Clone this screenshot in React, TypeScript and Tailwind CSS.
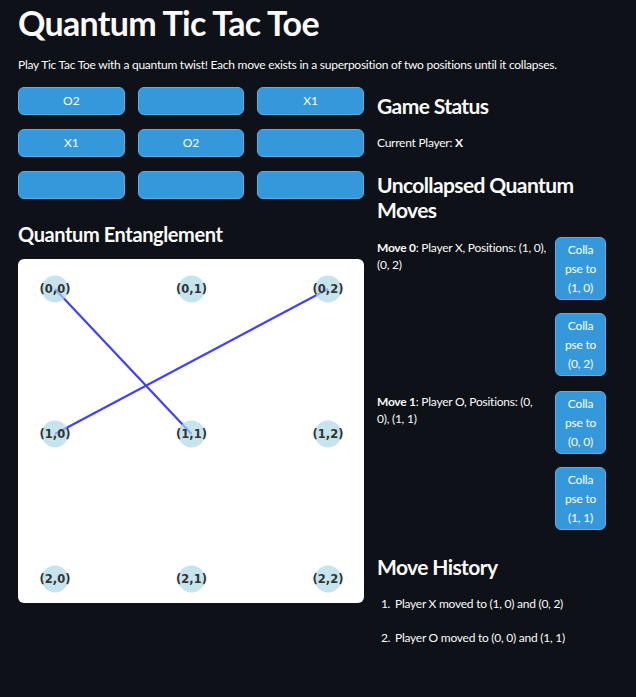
import React from "react";

const font = { fontFamily: '"Source Sans Pro", Lato, "Noto Sans", sans-serif' };

const board = [
  ["O2", "", "X1"],
  ["X1", "O2", ""],
  ["", "", ""],
];

const nodes = [0, 1, 2].flatMap((r) =>
  [0, 1, 2].map((c) => ({ r, c, x: 37 + c * 136.5, y: 30 + r * 145 }))
);

function pos(r: number, c: number) {
  return { x: 37 + c * 136.5, y: 30 + r * 145 };
}

function Entanglement() {
  const edges = [
    [pos(0, 0), pos(1, 1)],
    [pos(0, 2), pos(1, 0)],
  ];
  return (
    <div className="h-[344px] w-[346px] rounded-md bg-white">
      <svg width="346" height="344" viewBox="0 0 346 344">
        {edges.map(([a, b], i) => (
          <line key={i} x1={a.x} y1={a.y} x2={b.x} y2={b.y} stroke="#4040ff" strokeWidth="2.2" />
        ))}
        {nodes.map((n) => (
          <g key={`${n.r}-${n.c}`}>
            <circle cx={n.x} cy={n.y} r="13.5" fill="#add8e6" fillOpacity="0.7" />
            <text
              x={n.x}
              y={n.y + 4}
              textAnchor="middle"
              fontFamily='"DejaVu Sans", sans-serif'
              fontWeight="bold"
              fontSize="11.5"
              fill="#333333"
            >
              ({n.r},{n.c})
            </text>
          </g>
        ))}
      </svg>
    </div>
  );
}

function CollapseButton({ pos }: { pos: string }) {
  return (
    <button className="flex h-[63px] w-[51px] flex-col items-center justify-center rounded-md border border-[#5aaee6] bg-[#3498db] text-[12px] leading-[19px] tracking-[-0.2px] text-white">
      <span>Colla</span>
      <span>pse to</span>
      <span>{pos}</span>
    </button>
  );
}

function QuantumMove({ idx, player, text, a, b }: { idx: number; player: string; text: string; a: string; b: string }) {
  return (
    <div className="flex">
      <div className="w-[178px] pr-2 pt-[2px] text-[12px] leading-[17px] tracking-[-0.25px]">
        <b className="font-bold">Move {idx}</b>: Player {player}, Positions: {text}
      </div>
      <div className="flex flex-col gap-[13px]">
        <CollapseButton pos={a} />
        <CollapseButton pos={b} />
      </div>
    </div>
  );
}

export default function App() {
  return (
    <div className="min-h-screen bg-[#0e1117] px-[18px] text-[#fafafa]" style={font}>
      <h1 className="pt-[4px] text-[34px] font-bold leading-[38px] tracking-[-0.7px]">Quantum Tic Tac Toe</h1>
      <p className="mt-[15px] text-[12px] leading-[16px] tracking-[-0.25px]">
        Play Tic Tac Toe with a quantum twist! Each move exists in a superposition of two positions until it collapses.
      </p>
      <div className="mt-[14px] flex gap-[13px]">
        <div className="w-[346px]">
          <div className="grid grid-cols-3 gap-x-[13px] gap-y-[14px]">
            {board.flat().map((v, i) => (
              <button
                key={i}
                className="h-[28px] rounded-md border border-[#5aaee6] bg-[#3498db] text-[12px] text-white"
              >
                {v}
              </button>
            ))}
          </div>
          <h3 className="mt-[22px] text-[20px] font-bold leading-[26px] tracking-[-0.4px]">Quantum Entanglement</h3>
          <div className="mt-[12px]">
            <Entanglement />
          </div>
        </div>
        <div className="flex-1">
          <h3 className="mt-[6px] text-[21px] font-bold leading-[26px] tracking-[-0.6px]">Game Status</h3>
          <p className="mt-[16px] text-[12px] leading-[16px] tracking-[-0.25px]">
            Current Player: <b className="font-bold">X</b>
          </p>
          <h3 className="mt-[21px] text-[21px] font-bold leading-[25px] tracking-[-0.6px]">Uncollapsed Quantum Moves</h3>
          <div className="mt-[15px] flex flex-col gap-[15px]">
            <QuantumMove idx={0} player="X" text="(1, 0), (0, 2)" a="(1, 0)" b="(0, 2)" />
            <QuantumMove idx={1} player="O" text="(0, 0), (1, 1)" a="(0, 0)" b="(1, 1)" />
          </div>
          <h3 className="mt-[24px] text-[21px] font-bold leading-[26px] tracking-[-0.6px]">Move History</h3>
          <ol className="mt-[16px] list-decimal pl-[16px] text-[12px] leading-[16px] tracking-[-0.25px]">
            <li className="pl-[2px]">Player X moved to (1, 0) and (0, 2)</li>
            <li className="mt-[18px] pl-[2px]">Player O moved to (0, 0) and (1, 1)</li>
          </ol>
        </div>
      </div>
    </div>
  );
}
